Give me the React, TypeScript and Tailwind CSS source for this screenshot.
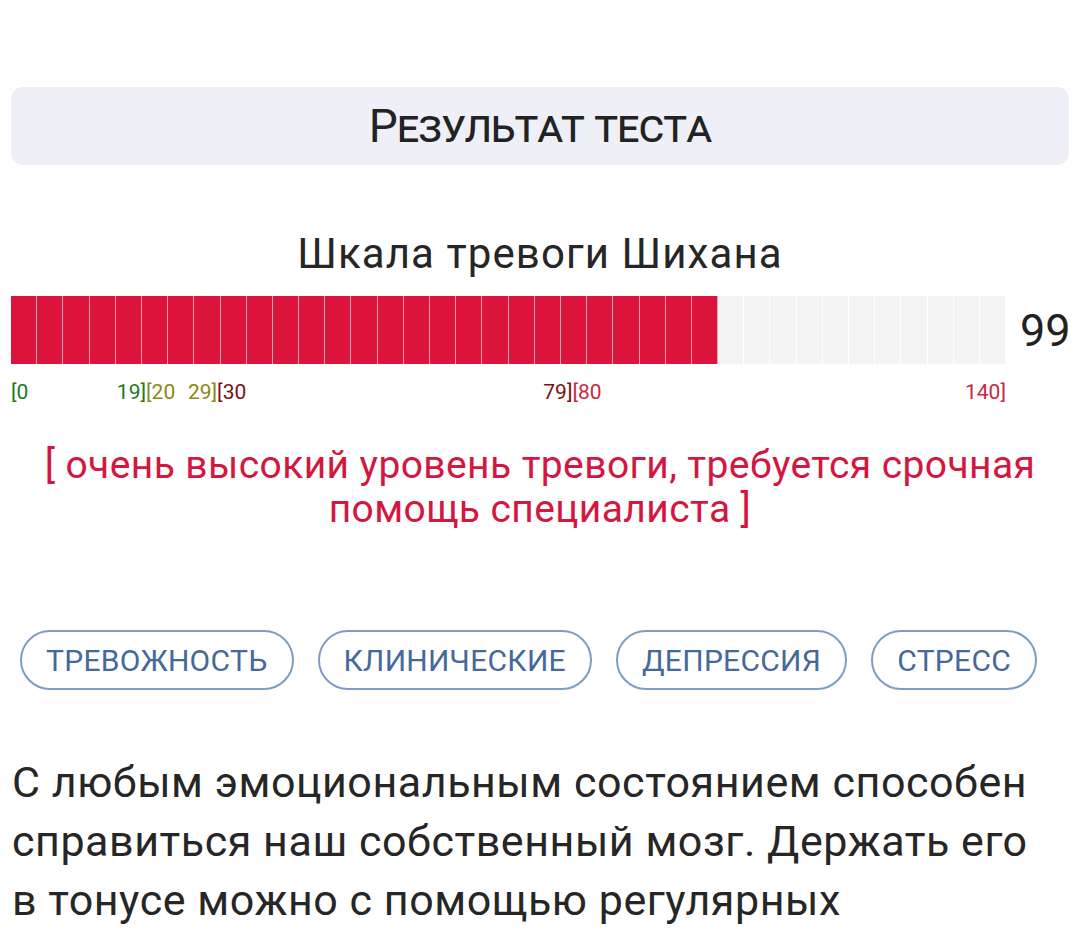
import React from "react";

const TOTAL = 140;
const VALUE = 99;
const SEGMENTS = 38;
const BAR_W = 995;

const labels: { text: string; color: string; pos: number; align: "start" | "end" }[] = [
  { text: "[0", color: "#1e7a1e", pos: 0, align: "start" },
  { text: "19]", color: "#1e7a1e", pos: 19, align: "end" },
  { text: "[20", color: "#8a8a14", pos: 19, align: "start" },
  { text: "29]", color: "#8a8a14", pos: 29, align: "end" },
  { text: "[30", color: "#7a1010", pos: 29, align: "start" },
  { text: "79]", color: "#7a1010", pos: 79, align: "end" },
  { text: "[80", color: "#c8283f", pos: 79, align: "start" },
  { text: "140]", color: "#c8283f", pos: 140, align: "end" },
];

const tags = ["ТРЕВОЖНОСТЬ", "КЛИНИЧЕСКИЕ", "ДЕПРЕССИЯ", "СТРЕСС"];

export default function App() {
  const filled = Math.round((VALUE / TOTAL) * SEGMENTS);
  return (
    <div
      className="w-[1080px] h-[931px] overflow-hidden bg-white text-[#222222]"
      style={{ fontFamily: "Roboto, 'Noto Sans', sans-serif" }}
    >
      <div className="pt-[87px] px-[11px]">
        <div className="h-[78px] rounded-[12px] bg-[#eff0f7] flex items-center justify-center">
          <span className="text-[46px] leading-none tracking-[-1px] [font-variant:small-caps] text-[#222222]">
            Результат теста
          </span>
        </div>
      </div>

      <div className="mt-[67px] text-center text-[42px] leading-[44px] tracking-[1.1px] text-[#262626]">
        Шкала тревоги Шихана
      </div>

      <div className="mt-[20px] pl-[11px] flex items-center gap-[14px]">
        <div className="flex h-[68px] w-[995px]">
          {Array.from({ length: SEGMENTS }).map((_, i) => (
            <div
              key={i}
              className={
                i < filled
                  ? "flex-1 h-full bg-[#dc143c] border-r border-[#f3a0b3]"
                  : "flex-1 h-full bg-[#f4f4f4] border-r border-white"
              }
            />
          ))}
        </div>
        <span className="text-[45px] leading-none text-[#222222]">{VALUE}</span>
      </div>

      <div className="relative ml-[11px] mt-[16px] h-[24px] w-[995px] text-[21px] leading-[24px]">
        {labels.map((l, i) => {
          const x = (l.pos / TOTAL) * BAR_W;
          return (
            <span
              key={i}
              className="absolute top-0 whitespace-nowrap"
              style={
                l.align === "start"
                  ? { left: x, color: l.color }
                  : { right: BAR_W - x, color: l.color }
              }
            >
              {l.text}
            </span>
          );
        })}
      </div>

      <div className="mt-[39px] px-[40px] text-center text-[39px] leading-[44px] tracking-[0.4px] text-[#d4173f]">
        [ очень высокий уровень тревоги, требуется срочная помощь специалиста ]
      </div>

      <div className="mt-[99px] pl-[20px] flex gap-[24px]">
        {tags.map((t) => (
          <div
            key={t}
            className="h-[60px] px-[24px] flex items-center rounded-full border-2 border-[#7d9dc2] text-[30px] tracking-[0.3px] text-[#45699a]"
          >
            {t}
          </div>
        ))}
      </div>

      <div className="mt-[63px] px-[12px] w-[1060px] text-[43px] leading-[59px] tracking-[0.55px] text-[#262626]">
        С любым эмоциональным состоянием способен справиться наш собственный мозг. Держать его в тонусе можно с помощью регулярных
      </div>
    </div>
  );
}
